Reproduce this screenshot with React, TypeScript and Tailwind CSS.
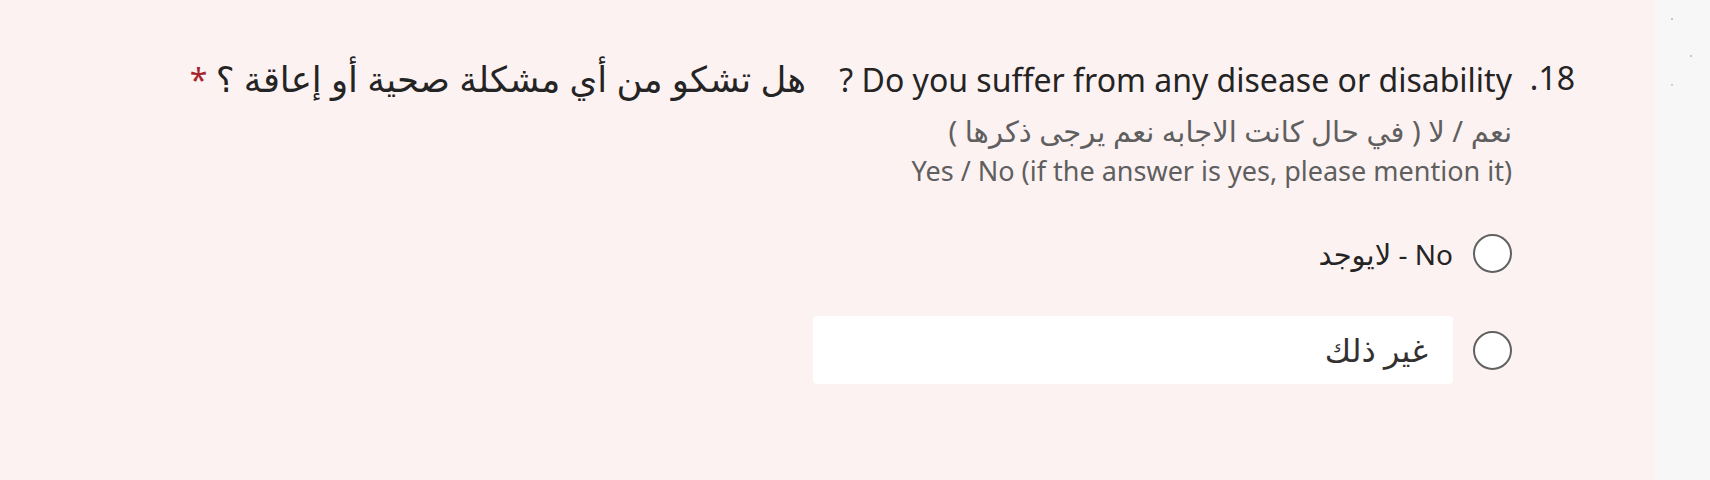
const FONT = "font-['Noto_Sans','DejaVu_Sans',sans-serif]";

function Radio() {
  return (
    <span className="block h-[39px] w-[39px] shrink-0 rounded-full border-2 border-[#616161] bg-white" />
  );
}

export default function App() {
  return (
    <div className={`flex h-[480px] w-full ${FONT}`}>
      {/* rtl: justify-start keeps the question on the right */}
      <main className="flex flex-1 justify-start bg-[#fdf2f2] pr-[80px] pt-[56px]" dir="rtl">
        <div className="flex items-start">
          <span className="w-[63px] shrink-0 text-[32px] leading-[44px] text-[#242424]">18.</span>
          <div className="flex flex-col items-start">
            <h2 className="whitespace-nowrap text-[32px] font-normal leading-[44px] text-[#242424]">
              Do you suffer from any disease or disability ?{"\u00a0\u00a0\u00a0 "}
              <span className="text-[35.5px]">هل تشكو من أي مشكلة صحية أو إعاقة ؟</span>{" "}
              <span className="text-[#a4262c]">*</span>
            </h2>
            <p className="mt-[9px] text-[27px] leading-[39px] text-[#5f5f5f]">
              <span className="text-[29px]">نعم / لا ( في حال كانت الاجابه نعم يرجى ذكرها )</span>
              <br />
              <span dir="ltr">Yes / No (if the answer is yes, please mention it)</span>
            </p>

            <label className="mt-[43px] flex h-[40px] items-center gap-[20px]">
              <Radio />
              <span className="text-[28px] leading-none text-[#242424]">
                No - <span className="text-[29px]">لايوجد</span>
              </span>
            </label>

            <div className="mt-[43px] flex h-[68px] items-center gap-[20px]">
              <Radio />
              <div className="flex h-[68px] w-[640px] items-center rounded-[4px] bg-white pr-[25px] text-[32px] text-[#323130]">
                غير ذلك
              </div>
            </div>
          </div>
        </div>
      </main>
      <aside className="flex w-[55px] flex-col bg-[#f7f7f8]">
        <span className="ml-[16px] mt-[18px] h-[2px] w-[2px] bg-[#c8c8c8]" />
        <span className="ml-[35px] mt-[35px] h-[2px] w-[2px] bg-[#c8c8c8]" />
        <span className="ml-[16px] mt-[27px] h-[2px] w-[2px] bg-[#d0d0d0]" />
      </aside>
    </div>
  );
}
